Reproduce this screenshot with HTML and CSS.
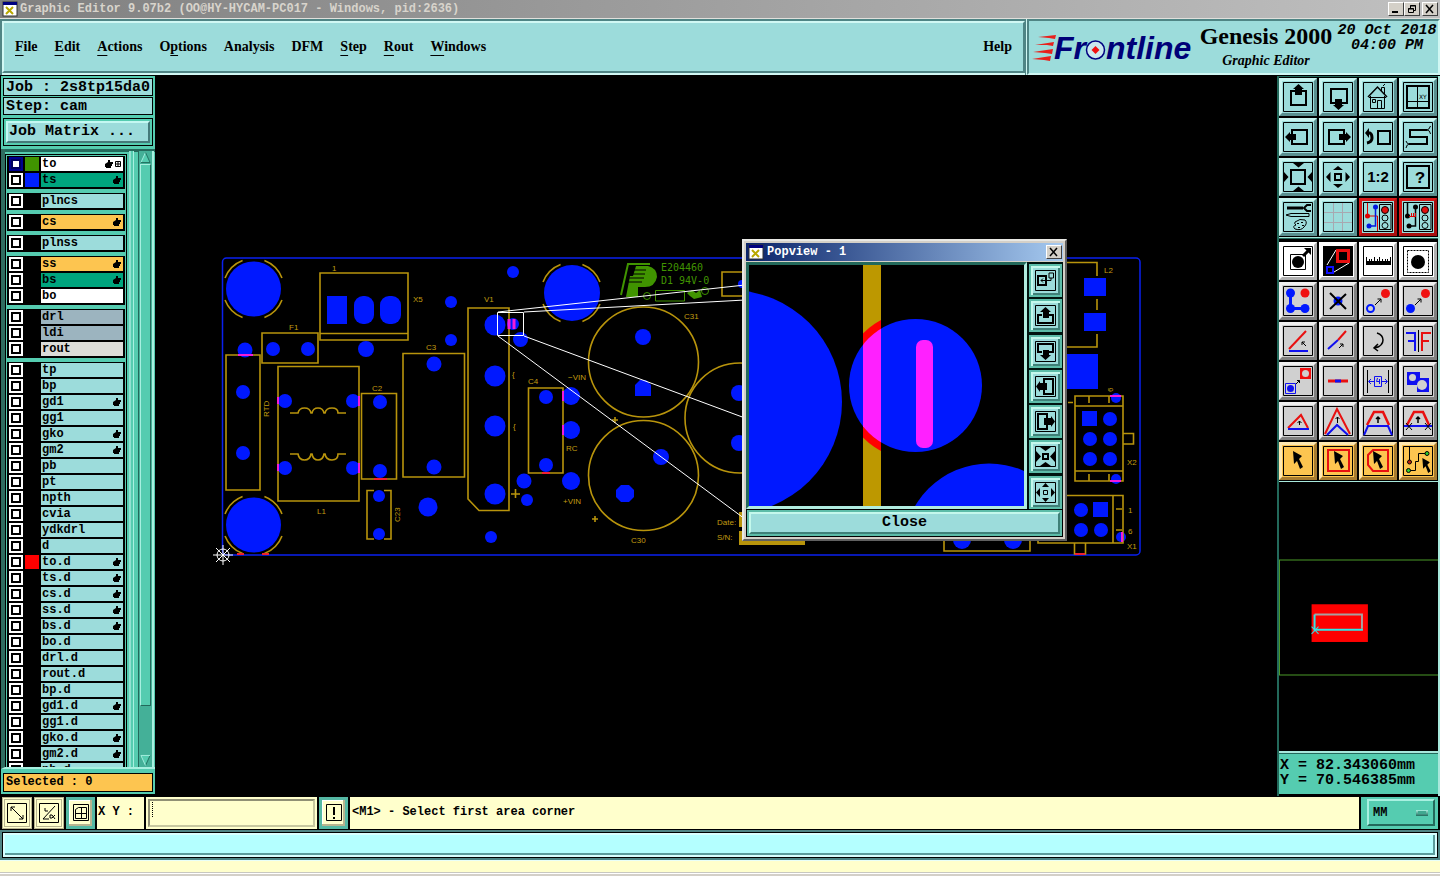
FILE: index.html
```html
<!DOCTYPE html>
<html lang="en">
<head>
<meta charset="utf-8">
<title>Graphic Editor 9.07b2</title>
<link rel="stylesheet" href="styles.css">
</head>
<body>
<svg class="defs" aria-hidden="true">
  <symbol id="hand" viewBox="0 0 8 8"><path d="M0 4L3 2V0H5V2H8V4H7V6H6V8H1V7H0Z" fill="#000"/></symbol>
  <symbol id="app" viewBox="0 0 16 16"><rect x="1" y="1" width="14" height="14" fill="#fff" stroke="#333"/><rect x="1" y="1" width="14" height="3" fill="#000080"/><path d="M4 6L11 13M11 6L4 13" stroke="#b8a800" stroke-width="2"/></symbol>
  <symbol id="cursor" viewBox="0 0 10 18"><path d="M0 0L9 5L6 8L10 16L7 18L4 10L1 13Z"/></symbol>
</svg>

<header class="titlebar">
  <svg class="app-icon"><use href="#app"/></svg>
  <h1>Graphic Editor 9.07b2 (OO@HY-HYCAM-PC017 - Windows, pid:2636)</h1>
  <div class="window-buttons">
    <button aria-label="Minimize"><svg viewBox="0 0 12 10"><path d="M2 8H8" stroke="#000" stroke-width="2"/></svg></button>
    <button aria-label="Restore"><svg viewBox="0 0 12 10"><path d="M4.5 4V1.5H9.5V6.5H8M4 2H10M2.5 4.5H7.5V8.5H2.5ZM2 5H8" fill="none" stroke="#000"/></svg></button>
    <button class="last" aria-label="Close window"><svg viewBox="0 0 12 10"><path d="M2 1L9 9M9 1L2 9" stroke="#000" stroke-width="1.5"/></svg></button>
  </div>
</header>

<div class="topbar">
  <nav class="menu">
    <button><u>F</u>ile</button><button><u>E</u>dit</button><button><u>A</u>ctions</button><button>O<u>p</u>tions</button><button>Analysis</button><button>DFM</button><button><u>S</u>tep</button><button><u>R</u>out</button><button><u>W</u>indows</button>
    <button class="help">Help</button>
  </nav>
  <div class="brand">
    <svg class="logo" viewBox="0 0 164 40" role="img" aria-label="Frontline">
      <g fill="#e8201c"><path d="M6 8L24 6L23 10L17 9ZM3 16L22 13L21 17L15 16ZM1 23L21 20L20 25L13 24ZM0 30L19 27L18 32L12 31Z"/></g>
      <g class="logo-type"><text x="22" y="30">Fr</text><text x="74" y="30">ntline</text></g>
      <circle cx="63.500" cy="21" r="9" fill="#c8e8ee" stroke="#000080" stroke-width="1.500"/>
      <path d="M63.500 17L67.500 21L63.500 25L59.500 21Z" fill="#f01010"/>
    </svg>
    <div class="product"><strong>Genesis 2000</strong><em>Graphic Editor</em></div>
    <time class="clock">20 Oct 2018<br>04:00 PM</time>
  </div>
</div>

<main class="workspace">
  <aside class="sidebar">
    <div class="job"><p>Job : 2s8tp15da0</p><p>Step: cam</p></div>
    <div class="matrix"><button>Job Matrix ...</button></div>
    <div class="list-pane">
      <div class="layers">
        <div class="group">
          <label class="layer current"><input type="checkbox"><i class="swatch green"></i><span class="name white">to<svg class="hand"><use href="#hand"/></svg><svg class="win" viewBox="0 0 6 6"><path d="M.5 .5H5.500V5.500H.5ZM3 0V6M0 3H6" fill="none" stroke="#000"/></svg></span></label>
          <label class="layer"><input type="checkbox"><i class="swatch blue"></i><span class="name jade">ts<svg class="hand"><use href="#hand"/></svg></span></label>
        </div>
        <div class="group">
          <label class="layer"><input type="checkbox"><i class="swatch"></i><span class="name">plncs</span></label>
        </div>
        <div class="group">
          <label class="layer"><input type="checkbox"><i class="swatch"></i><span class="name amber">cs<svg class="hand"><use href="#hand"/></svg></span></label>
        </div>
        <div class="group">
          <label class="layer"><input type="checkbox"><i class="swatch"></i><span class="name">plnss</span></label>
        </div>
        <div class="group">
          <label class="layer"><input type="checkbox"><i class="swatch"></i><span class="name amber">ss<svg class="hand"><use href="#hand"/></svg></span></label>
          <label class="layer"><input type="checkbox"><i class="swatch"></i><span class="name jade">bs<svg class="hand"><use href="#hand"/></svg></span></label>
          <label class="layer"><input type="checkbox"><i class="swatch"></i><span class="name white">bo</span></label>
        </div>
        <div class="group">
          <label class="layer"><input type="checkbox"><i class="swatch"></i><span class="name slate">drl</span></label>
          <label class="layer"><input type="checkbox"><i class="swatch"></i><span class="name slate">ldi</span></label>
          <label class="layer"><input type="checkbox"><i class="swatch"></i><span class="name pale">rout</span></label>
        </div>
        <div class="group">
          <label class="layer"><input type="checkbox"><i class="swatch"></i><span class="name">tp</span></label>
          <label class="layer"><input type="checkbox"><i class="swatch"></i><span class="name">bp</span></label>
          <label class="layer"><input type="checkbox"><i class="swatch"></i><span class="name">gd1<svg class="hand"><use href="#hand"/></svg></span></label>
          <label class="layer"><input type="checkbox"><i class="swatch"></i><span class="name">gg1</span></label>
          <label class="layer"><input type="checkbox"><i class="swatch"></i><span class="name">gko<svg class="hand"><use href="#hand"/></svg></span></label>
          <label class="layer"><input type="checkbox"><i class="swatch"></i><span class="name">gm2<svg class="hand"><use href="#hand"/></svg></span></label>
          <label class="layer"><input type="checkbox"><i class="swatch"></i><span class="name">pb</span></label>
          <label class="layer"><input type="checkbox"><i class="swatch"></i><span class="name">pt</span></label>
          <label class="layer"><input type="checkbox"><i class="swatch"></i><span class="name">npth</span></label>
          <label class="layer"><input type="checkbox"><i class="swatch"></i><span class="name">cvia</span></label>
          <label class="layer"><input type="checkbox"><i class="swatch"></i><span class="name">ydkdrl</span></label>
          <label class="layer"><input type="checkbox"><i class="swatch"></i><span class="name">d</span></label>
          <label class="layer"><input type="checkbox"><i class="swatch red"></i><span class="name">to.d<svg class="hand"><use href="#hand"/></svg></span></label>
          <label class="layer"><input type="checkbox"><i class="swatch"></i><span class="name">ts.d<svg class="hand"><use href="#hand"/></svg></span></label>
          <label class="layer"><input type="checkbox"><i class="swatch"></i><span class="name">cs.d<svg class="hand"><use href="#hand"/></svg></span></label>
          <label class="layer"><input type="checkbox"><i class="swatch"></i><span class="name">ss.d<svg class="hand"><use href="#hand"/></svg></span></label>
          <label class="layer"><input type="checkbox"><i class="swatch"></i><span class="name">bs.d<svg class="hand"><use href="#hand"/></svg></span></label>
          <label class="layer"><input type="checkbox"><i class="swatch"></i><span class="name">bo.d</span></label>
          <label class="layer"><input type="checkbox"><i class="swatch"></i><span class="name">drl.d</span></label>
          <label class="layer"><input type="checkbox"><i class="swatch"></i><span class="name">rout.d</span></label>
          <label class="layer"><input type="checkbox"><i class="swatch"></i><span class="name">bp.d</span></label>
          <label class="layer"><input type="checkbox"><i class="swatch"></i><span class="name">gd1.d<svg class="hand"><use href="#hand"/></svg></span></label>
          <label class="layer"><input type="checkbox"><i class="swatch"></i><span class="name">gg1.d</span></label>
          <label class="layer"><input type="checkbox"><i class="swatch"></i><span class="name">gko.d<svg class="hand"><use href="#hand"/></svg></span></label>
          <label class="layer"><input type="checkbox"><i class="swatch"></i><span class="name">gm2.d<svg class="hand"><use href="#hand"/></svg></span></label>
          <label class="layer"><input type="checkbox"><i class="swatch"></i><span class="name">pb.d</span></label>
        </div>
      </div>
      <div class="rail"></div>
      <div class="scrollbar">
        <svg viewBox="0 0 12 13"><path d="M6 1L11 12H1Z" fill="#55ccb0"/><path d="M1 12L6 1" stroke="#a8f0e0" fill="none"/><path d="M6 1L11 12H1" stroke="#1f6b5c" fill="none"/></svg>
        <div class="thumb"></div>
        <svg viewBox="0 0 12 13"><path d="M1 1H11L6 12Z" fill="#55ccb0"/><path d="M11 1L6 12" stroke="#1f6b5c" fill="none"/><path d="M11 1H1L6 12" stroke="#a8f0e0" fill="none"/></svg>
      </div>
    </div>
    <p class="selected">Selected : 0</p>
  </aside>

  <section class="canvas">
    <svg class="board" viewBox="155 76 1122 720" preserveAspectRatio="xMinYMin meet">
      <g fill="#0018ff">
        <circle cx="253.500" cy="289" r="27.500"/><circle cx="253.500" cy="525" r="27.500"/><circle cx="572" cy="293" r="28"/>
        <rect x="327" y="296" width="20" height="28"/><rect x="354" y="296" width="20" height="28" rx="9"/><rect x="380" y="296" width="21" height="28" rx="9"/>
        <circle cx="245" cy="350" r="7.500"/><circle cx="273" cy="349" r="7"/><circle cx="308" cy="349" r="7"/><circle cx="366" cy="349" r="8"/>
        <circle cx="451" cy="302" r="6"/><circle cx="451" cy="340" r="6"/><circle cx="243" cy="392" r="7"/><circle cx="243" cy="453" r="7"/>
        <circle cx="285" cy="401" r="7"/><circle cx="353" cy="401" r="7"/><circle cx="285" cy="468" r="7"/><circle cx="353" cy="468" r="7"/>
        <circle cx="380" cy="402" r="7"/><circle cx="380" cy="471" r="7"/><circle cx="434" cy="364" r="7.500"/><circle cx="434" cy="467" r="7.500"/>
        <circle cx="379" cy="496" r="6"/><circle cx="379" cy="534" r="6"/><circle cx="428" cy="507" r="9.500"/>
        <circle cx="513" cy="272" r="6"/><circle cx="495" cy="325" r="10.500"/><circle cx="495" cy="376" r="10.500"/><circle cx="495" cy="426" r="10.500"/><circle cx="495" cy="494" r="10.500"/>
        <circle cx="513" cy="324" r="6"/><circle cx="520.500" cy="339.500" r="7.500"/><circle cx="546" cy="397" r="7"/><circle cx="546" cy="465" r="7"/>
        <circle cx="571" cy="396" r="9"/><circle cx="571" cy="430" r="9"/><circle cx="571" cy="481" r="9"/><circle cx="524" cy="481" r="7.500"/><circle cx="527" cy="500" r="6"/><circle cx="491" cy="537" r="6"/>
        <circle cx="643" cy="337" r="8"/><path d="M640 380H646L651 385V396H635V385Z"/><circle cx="661" cy="457" r="8"/>
        <path d="M621 485H629L634 490V497L629 502H621L616 497V490Z"/><circle cx="739" cy="393" r="8"/><circle cx="739" cy="443" r="8"/><circle cx="742" cy="284" r="4"/>
        <rect x="1084" y="278" width="22" height="18"/><rect x="1084" y="313" width="22" height="18"/><rect x="1060" y="354" width="38" height="35"/>
        <rect x="1082" y="411" width="15" height="15"/><circle cx="1110" cy="419" r="7"/><circle cx="1090" cy="439" r="7"/><circle cx="1110" cy="439" r="7"/><circle cx="1090" cy="459" r="7"/><circle cx="1110" cy="459" r="7"/>
        <circle cx="1081" cy="510" r="7"/><rect x="1093" y="502" width="15" height="15"/><circle cx="1081" cy="530" r="7"/><circle cx="1101" cy="530" r="7"/>
        <circle cx="1116" cy="398" r="5"/><circle cx="1116" cy="479" r="5"/><circle cx="1121" cy="537" r="5"/><circle cx="962" cy="540" r="9"/><circle cx="1013" cy="540" r="9"/>
      </g>
      <rect x="222.500" y="258" width="917.500" height="297" rx="4" fill="none" stroke="#0a20f0" stroke-width="1.500"/>
      <g fill="none" stroke="#b8940c" stroke-width="1.600">
        <g stroke-dasharray="48 42" stroke-dashoffset="-21"><circle cx="253.500" cy="289" r="30.500" pathLength="360"/><circle cx="253.500" cy="525" r="30.500" pathLength="360"/><circle cx="571.500" cy="293" r="30.500" pathLength="360"/></g>
        <path d="M320 273H408V340H320ZM320 333.500H408M262 333H318V363H262ZM226 355H260V490H226ZM278 366.500H359V501H278ZM361.500 393.500H396.500V479H361.500ZM403 353.500H464.500V477H403Z"/>
        <path d="M374 490.500H367V539H374M384 490.500H391V539H384"/>
        <path d="M468 308H509V510.500H479L468 499ZM528.500 388H563V473H528.500ZM722 272H745V296H722Z"/>
        <path d="M290 413H298Q299 408 304.500 408T311 413H312Q313 408 318 408T324 413H325Q326 408 332 408T338 413H346M290 454H298Q299 460 304.500 460T311 454H312Q313 460 318 460T324 454H325Q326 460 332 460T338 454H346"/>
        <circle cx="643.500" cy="362" r="55"/><circle cx="643.500" cy="475.500" r="55"/><circle cx="740" cy="418" r="55"/>
        <path d="M1060 262.500H1097V276M1097 299V310M1097 334V347H1060"/>
        <path d="M1075 396H1123V481H1075ZM1075 406H1123M1075 471H1123M1089 396V403M1109 396V403M1089 474V481M1109 474V481M1123 433.500H1133.500V444H1123M1068 402.500H1073"/>
        <path d="M1060 495.500H1123V543H1038V540M1113 496V543M1116 509H1122M1116 530H1122M1074.500 543V554H1085.500V543M944 540V551H1030V540"/>
        <path d="M511 494H520M515.500 489V498M592 519H598M595 516V522M612 420H618M615 417V423"/>
      </g>
      <path d="M739 512H745V527H739ZM739 531H745V540H805V545H739Z" fill="#b8940c"/>
      <g stroke="#f41cd8" stroke-width="2"><path d="M238 355H253M278 397V404M359 396V406M278 464V471M359 463V473M563 391V401M563 425V435M1110 396H1121M1110 481H1121M1122 532V542"/><path d="M509 319V329M514 319V329" stroke-width="3"/><path d="M374 479H387M542 473H550M1075 554H1085M237 554H244M262 554H269" stroke="#f02030"/></g>
      <g class="silk">
        <text x="332" y="271">1</text><text x="413" y="302">X5</text><text x="289" y="330">F1</text><text x="372" y="391">C2</text><text x="426" y="350">C3</text><text x="317" y="514">L1</text>
        <text transform="translate(269 417) rotate(-90)">RTD</text><text transform="translate(400 522) rotate(-90)">C23</text>
        <text x="484" y="302">V1</text><text x="528" y="384">C4</text><text x="568" y="380">−VIN</text><text x="566" y="451">RC</text><text x="563" y="504">+VIN</text><text x="684" y="319">C31</text><text x="631" y="543">C30</text><text x="512" y="377">{</text><text x="513" y="429">{</text><text x="717" y="525">Date:</text><text x="717" y="540">S/N:</text>
        <text x="1104" y="273">L2</text><text x="1127" y="465">X2</text><text x="1127" y="549">X1</text><text x="1128" y="513">1</text><text x="1128" y="534">6</text><text transform="translate(1113 392) rotate(-90)">6</text>
      </g>
      <g fill="#409400"><path d="M636 266H648Q657 268 657 277Q655 287 645 287H638V297H626L630 276H633Z"/><text class="mark" x="661" y="271">E204460</text><text class="mark" x="661" y="284">D1 94V-0</text><path d="M687 293L692 290L696 293L700 290L702 297L694 299L690 296Z"/></g>
      <path d="M631 270H646M630 274H645M629 278H644M628 282H642" stroke="#000"/>
      <path d="M650 264H628L621 295" fill="none" stroke="#409400" stroke-width="2"/><path d="M655.500 290.500H684.500V301H655.500Z" fill="none" stroke="#409400"/><g fill="none" stroke="#409400"><circle cx="647" cy="296" r="3.500"/><circle cx="705" cy="291" r="3.500"/></g>
      <path d="M497.500 312.500H523.500V335.500H497.500ZM498 312L745 285M524 312L745 300M524 336L745 418M498 336L745 519" fill="none" stroke="#fff"/>
      <g fill="none" stroke="#fff"><circle cx="223" cy="555" r="6"/><path d="M213 555H233M223 545V565M216 548L230 562M230 548L216 562"/></g>
    </svg>

    <div class="popup" role="dialog" aria-label="Popview - 1">
      <div class="popup-title"><svg class="app-icon"><use href="#app"/></svg><h2>Popview - 1</h2><button class="win-close" aria-label="Close popview"><svg viewBox="0 0 12 10"><path d="M2 1L9 9M9 1L2 9" stroke="#000" stroke-width="1.5"/></svg></button></div>
      <div class="popup-body">
        <div class="popup-main">
          <svg class="view" viewBox="749 265 275 241">
            <defs><clipPath id="band"><path d="M863 265H881V506H863Z"/></clipPath></defs>
            <g fill="#0018ff"><circle cx="730" cy="402" r="112"/><circle cx="915.500" cy="385.500" r="66.500"/><circle cx="989" cy="549" r="85.500"/></g>
            <g clip-path="url(#band)"><path d="M863 265H881V506H863Z" fill="#bd9800"/><circle cx="915.500" cy="385.500" r="74" fill="#f00"/><circle cx="915.500" cy="385.500" r="66.500" fill="#ff20ff"/></g>
            <rect x="916" y="340" width="17" height="108" rx="7" fill="#ff20ff"/>
          </svg>
          <div class="popup-tools">
            <button aria-label="Attach"><svg viewBox="0 0 21 21"><path d="M.5 .5H20.500V20.500H.5Z"/><path d="M3 6H11V15H3Z" stroke-width="2"/><path d="M14 3H18.500V8H14ZM16 8V10.500H6M8 8.500L6 10.500L8 12.500"/></svg></button>
            <button aria-label="Pan up"><svg viewBox="0 0 21 21"><path d="M.5 .5H20.500V20.500H.5Z"/><path d="M7 10H3V18H18V10H14" stroke-width="2"/><path class="f" d="M10.500 2L16 7H14V13H8V7H5Z"/></svg></button>
            <button aria-label="Pan down"><svg viewBox="0 0 21 21"><path d="M.5 .5H20.500V20.500H.5Z"/><path d="M7 11H3V3H18V11H14" stroke-width="2"/><path class="f" d="M10.500 19L16 14H14V9H8V14H5Z"/></svg></button>
            <button aria-label="Pan left"><svg viewBox="0 0 21 21"><path d="M.5 .5H20.500V20.500H.5Z"/><path d="M9 7V3H18V18H9V14" stroke-width="2"/><path class="f" d="M1 10.500L5 5V7H12V14H5V16Z"/></svg></button>
            <button aria-label="Pan right"><svg viewBox="0 0 21 21"><path d="M.5 .5H20.500V20.500H.5Z"/><path d="M12 7V3H3V18H12V14" stroke-width="2"/><path class="f" d="M20 10.500L16 5V7H9V14H16V16Z"/></svg></button>
            <button aria-label="Zoom in"><svg viewBox="0 0 21 21"><path d="M.5 .5H20.500V20.500H.5Z"/><path d="M8 8H13V13H8Z" stroke-width="2"/><path class="f" d="M5 1H16L10.500 5ZM5 20H16L10.500 16ZM1 5L6 10.500L1 16ZM20 5L15 10.500L20 16Z"/></svg></button>
            <button aria-label="Zoom out"><svg viewBox="0 0 21 21"><path d="M.5 .5H20.500V20.500H.5Z"/><path d="M8.500 8.500H12.500V12.500H8.500Z"/><path class="f" d="M7 5H14L10.500 1ZM7 16H14L10.500 20ZM5 6V15L1 10.500ZM16 6V15L20 10.500Z"/></svg></button>
          </div>
        </div>
        <div class="popup-foot"><button>Close</button></div>
      </div>
    </div>
  </section>

  <aside class="tools">
    <div class="tool-grid">
      <button aria-label="Pan up"><svg viewBox="0 0 30 30"><path d="M.5 .5H29.500V29.500H.5Z"/><path d="M8 9H23V23H8Z" stroke-width="2"/><path class="f" d="M15.500 2L21 7H19V13H12V7H10Z"/></svg></button>
      <button aria-label="Pan down"><svg viewBox="0 0 30 30"><path d="M.5 .5H29.500V29.500H.5Z"/><path d="M8 7H24V21H8Z" stroke-width="2"/><path class="f" d="M15.500 28L21 23H19V17H12V23H10Z"/></svg></button>
      <button aria-label="Home"><svg viewBox="0 0 30 30"><path d="M.5 .5H29.500V29.500H.5Z"/><path d="M5 15L14.500 5L24 15" stroke-width="1.500"/><path d="M7.500 14V26.500H21.500V14M14.500 26V18.500H18.500V26M9.500 17.500H12.500V20.500H9.500ZM6 15.500H23M18.500 9V5.500H21.500V12M20 4L22 2"/></svg></button>
      <button aria-label="Window XY"><svg viewBox="0 0 30 30"><path d="M.5 .5H29.500V29.500H.5Z"/><path d="M4 4H26V26H4Z" stroke-width="2"/><path d="M14.500 4V26M4 19.500H26"/><text class="tiny" x="16" y="17">XY</text></svg></button>

      <button aria-label="Pan left"><svg viewBox="0 0 30 30"><path d="M.5 .5H29.500V29.500H.5Z"/><path d="M9 8H24V22H9Z" stroke-width="2"/><path class="f" d="M2 15L7 10V12H13V18H7V20Z"/></svg></button>
      <button aria-label="Pan right"><svg viewBox="0 0 30 30"><path d="M.5 .5H29.500V29.500H.5Z"/><path d="M6 8H21V22H6Z" stroke-width="2"/><path class="f" d="M28 15L23 10V12H16V18H23V20Z"/></svg></button>
      <button aria-label="Previous view"><svg viewBox="0 0 30 30"><path d="M.5 .5H29.500V29.500H.5Z"/><path d="M15 9H27V22H15Z" stroke-width="2"/><path d="M5 11H7Q9 12 9 16T4 21" stroke-width="3"/><path class="f" d="M2 11L6 6V16Z"/></svg></button>
      <button aria-label="Snake"><svg viewBox="0 0 30 30"><path d="M.5 .5H29.500V29.500H.5Z"/><path d="M24 8H7V15H24V22H6" stroke-width="2"/><path d="M27.500 4Q26 8 24 8Q27 8 27.500 12M3 19Q4 22 6 22Q4 22 3 26"/></svg></button>

      <button aria-label="Zoom in"><svg viewBox="0 0 30 30"><path d="M.5 .5H29.500V29.500H.5Z"/><path d="M8 8H22V22H8Z" stroke-width="2"/><path class="f" d="M10 1H21L15.500 5.500ZM10 29H21L15.500 24.500ZM1 10L5.500 15L1 20ZM29 10L24.500 15L29 20Z"/></svg></button>
      <button aria-label="Zoom out"><svg viewBox="0 0 30 30"><path d="M.5 .5H29.500V29.500H.5Z"/><path d="M12 12H18V18H12Z" stroke-width="2"/><path class="f" d="M10 8H20L15 4ZM10 22H20L15 26ZM7.500 10V20L3 15ZM22.500 10V20L27 15Z"/></svg></button>
      <button aria-label="Scale 1:2"><svg viewBox="0 0 30 30"><path d="M.5 .5H29.500V29.500H.5Z"/><text class="ratio" x="15" y="20">1:2</text></svg></button>
      <button aria-label="Help"><svg viewBox="0 0 30 30"><path d="M.5 .5H29.500V29.500H.5Z"/><path d="M4 4H26V26H4Z" stroke-width="2"/><text class="query" x="17" y="21">?</text></svg></button>

      <button aria-label="Settings"><svg viewBox="0 0 30 30"><path d="M.5 .5H29.500V29.500H.5Z"/><path d="M4 6H20" stroke-width="3"/><path d="M28 3H24L21 6L24 9H28" stroke-width="2"/><path d="M3 13L8 11.500H26V14.500H8ZM12 20Q17 16 22 18Q25 21 21 25Q18 29 12 27Q9 24 13 23Q11 22 12 20Z"/><path d="M15 21V22M19 20V21M20 23V24M16 25V26" stroke-width="2"/></svg></button>
      <button aria-label="Grid"><svg viewBox="0 0 30 30"><path d="M.5 .5H29.500V29.500H.5Z"/><path d="M10.500 1V29M19.500 1V29M1 10.500H29M1 20.500H29" stroke="#a8a8b0"/></svg></button>
      <button class="alert" aria-label="Net check"><svg viewBox="0 0 30 30"><path d="M.5 .5H29.500V29.500H.5Z"/><path d="M4.500 1V14H14.500V29" stroke="#e00000"/><path d="M12.500 5V24H6" stroke="#0018e0" stroke-width="1.500"/><g stroke="none"><circle cx="12.500" cy="5" r="2.500" fill="#0018e0"/><circle cx="6" cy="24" r="2.500" fill="#0018e0"/><circle cx="4.500" cy="14" r="2.500" fill="#e00000"/></g><path d="M16.500 2.500H28V27.500H16.500Z"/><circle cx="22" cy="8" r="3.500" fill="#e01010"/><circle cx="22" cy="16" r="3"/><circle cx="22" cy="23.500" r="3"/></svg></button>
      <button class="alert" aria-label="Rule check"><svg viewBox="0 0 30 30"><path d="M.5 .5H29.500V29.500H.5Z"/><path d="M4.500 1V14M12.500 5V24H6" stroke-width="1.500"/><g class="f"><circle cx="12.500" cy="5" r="2.500"/><circle cx="6" cy="24" r="2.500"/><circle cx="4.500" cy="14" r="2.500"/></g><path d="M6 14.500H13M8.500 11V14M10.500 11V14M12.500 11V14" stroke="#e00000"/><path d="M16.500 2.500H28V27.500H16.500Z"/><circle cx="22" cy="8" r="3.500" fill="#e01010"/><circle cx="22" cy="16" r="3"/><circle cx="22" cy="23.500" r="3"/></svg></button>
    </div>

    <div class="tool-grid edit">
      <button class="bright" aria-label="Select feature"><svg viewBox="0 0 30 30"><path d="M.5 .5H29.500V29.500H.5Z"/><path d="M7.500 8.500H22.500V23.500H7.500Z"/><circle class="f" cx="15" cy="16" r="6"/><path d="M20 10L26 4" stroke-width="3"/><path class="f" d="M21 2H28V9Z"/></svg></button>
      <button class="bright" aria-label="Popview"><svg viewBox="0 0 30 30"><path class="f" d="M0 0H30V30H0Z"/><path d="M4 19L13 4M11 26L26 17" stroke="#fff"/><path d="M14.500 4.500H25.500V15.500H14.500Z" stroke="#e81010" stroke-width="3"/><path d="M4 21H10V27H4Z" stroke="#1010ff" stroke-width="2"/></svg></button>
      <button class="bright" aria-label="Measure"><svg viewBox="0 0 30 30"><path d="M.5 .5H29.500V29.500H.5Z"/><path class="f" d="M3 15H28V19H3Z"/><path d="M3.500 11V16M6.500 13V16M8.500 13V16M11.500 11V16M14.500 13V16M16.500 11V16M19.500 13V16M22.500 13V16M24.500 13V16M27.500 11V16"/></svg></button>
      <button class="bright" aria-label="Reference selection"><svg viewBox="0 0 30 30"><path d="M.5 .5H29.500V29.500H.5Z"/><path d="M4.500 4.500H25.500V26.500H4.500Z" stroke-dasharray="2 1"/><circle class="f" cx="15" cy="16" r="7"/></svg></button>

      <button aria-label="Add"><svg viewBox="0 0 30 30"><path d="M.5 .5H29.500V29.500H.5Z"/><path d="M7.500 7V22.500H22" stroke="#0018ff" stroke-width="3"/><g stroke="none" fill="#0018ff"><circle cx="7.500" cy="7" r="4.500"/><circle cx="7.500" cy="22.500" r="4.500"/><circle cx="22" cy="22.500" r="4.500"/></g><circle cx="22" cy="7" r="4.500" fill="#f01010" stroke="none"/></svg></button>
      <button aria-label="Delete"><svg viewBox="0 0 30 30"><path d="M.5 .5H29.500V29.500H.5Z"/><circle cx="15" cy="15" r="4.500" fill="#0018ff" stroke="none"/><path d="M7 7L23 23M23 8L7 23" stroke-width="2"/></svg></button>
      <button aria-label="Copy"><svg viewBox="0 0 30 30"><path d="M.5 .5H29.500V29.500H.5Z"/><circle cx="7.500" cy="22.500" r="3.500" stroke="#0018ff" stroke-width="2"/><circle cx="22.500" cy="7.500" r="4.500" fill="#f01010" stroke="none"/><path d="M12 19L18 13M14.500 13H18V16.500"/></svg></button>
      <button aria-label="Move"><svg viewBox="0 0 30 30"><path d="M.5 .5H29.500V29.500H.5Z"/><circle cx="7.500" cy="22.500" r="4.500" fill="#0018ff" stroke="none"/><circle cx="22.500" cy="7.500" r="4.500" fill="#f01010" stroke="none"/><path d="M12 19L18 13M14.500 13H18V16.500"/></svg></button>

      <button aria-label="Rotate line"><svg viewBox="0 0 30 30"><path d="M.5 .5H29.500V29.500H.5Z"/><path d="M6 23L23 5" stroke="#e81010" stroke-width="2"/><path d="M6 25H25" stroke="#1010f0" stroke-width="2"/><path d="M23 20L19 16M19 19V16H22"/></svg></button>
      <button aria-label="Extend line"><svg viewBox="0 0 30 30"><path d="M.5 .5H29.500V29.500H.5Z"/><path d="M15 14L23 5" stroke="#e81010" stroke-width="2"/><path d="M5 23L15 14" stroke="#1010f0" stroke-width="2"/><path d="M16 22L20 18M17 18H20V21"/></svg></button>
      <button aria-label="Rotate"><svg viewBox="0 0 30 30"><path d="M.5 .5H29.500V29.500H.5Z"/><path d="M14 7Q20 9 20 14Q20 20 12 22M15 18L11 22L15 25" stroke-width="1.500"/></svg></button>
      <button aria-label="Mirror"><svg viewBox="0 0 30 30"><path d="M.5 .5H29.500V29.500H.5Z"/><path d="M3 7H12V25M5 15H12" stroke="#1010f0" stroke-width="2"/><path d="M15.500 4V26"/><path d="M28 7H19V25M26 15H19" stroke="#e81010" stroke-width="2"/></svg></button>

      <button aria-label="Change symbol"><svg viewBox="0 0 30 30"><path d="M.5 .5H29.500V29.500H.5Z"/><path d="M17 2H28V13H17Z" fill="#f01010" stroke="none"/><circle cx="22.500" cy="7.500" r="3.500" fill="#d0d0d0" stroke="none"/><path d="M2.500 17.500H12.500V27.500H2.500Z" stroke="#1010f0"/><circle cx="7.500" cy="22.500" r="3.500" fill="#1010f0" stroke="none"/><path d="M13 18L16.500 14.500M14 14.500H16.500V17"/></svg></button>
      <button aria-label="Break line"><svg viewBox="0 0 30 30"><path d="M.5 .5H29.500V29.500H.5Z"/><path d="M5 15H25" stroke="#e81010" stroke-width="3"/><path d="M12 15H18" stroke="#1010f0" stroke-width="3"/></svg></button>
      <button aria-label="Spacing"><svg viewBox="0 0 30 30"><path d="M.5 .5H29.500V29.500H.5Z"/><path d="M4.500 4V27M25.500 4V27"/><path d="M11.500 10.500H18.500V20.500H11.500ZM11 15.500H6M8 13L5.500 15.500L8 18M19 15.500H24M22 13L24.500 15.500L22 18M14.500 12L13.500 15.500H17M16.500 13V18" stroke="#1010f0"/></svg></button>
      <button aria-label="Surface"><svg viewBox="0 0 30 30"><path d="M.5 .5H29.500V29.500H.5Z"/><path d="M4 6H17V12H26V26H14V19H4Z" fill="#1010f0" stroke="none"/><g fill="#d0d0d0" stroke="none"><circle cx="9.500" cy="11.500" r="3.500"/><circle cx="19" cy="19" r="5"/></g></svg></button>

      <button aria-label="Corner triangle"><svg viewBox="0 0 30 30"><path d="M.5 .5H29.500V29.500H.5Z"/><path d="M5 22L18 9L25 22" stroke="#e81010" stroke-width="2"/><path d="M5 23H26" stroke="#1010f0" stroke-width="2"/><path d="M16.500 19V15M14.500 17L16.500 15L18.500 17"/></svg></button>
      <button aria-label="Move corner"><svg viewBox="0 0 30 30"><path d="M.5 .5H29.500V29.500H.5Z"/><path d="M2 28L14 3L27 28" stroke="#e81010" stroke-width="2"/><path d="M4 29L14 19L25 29" stroke="#1010f0" stroke-width="2"/><path d="M14.500 17V11M12.500 13L14.500 11L16.500 13"/></svg></button>
      <button aria-label="Move segment"><svg viewBox="0 0 30 30"><path d="M.5 .5H29.500V29.500H.5Z"/><path d="M4 19L11 6H20L26 19" stroke="#e81010" stroke-width="2.500"/><path d="M1 29L5 20H25L29 29" stroke="#1010f0" stroke-width="2"/><path d="M15 17V11M13 13L15 11L17 13" stroke-width="1.500"/></svg></button>
      <button aria-label="Offset segment"><svg viewBox="0 0 30 30"><path d="M.5 .5H29.500V29.500H.5Z"/><path d="M4 19L11 6H20L26 19" stroke="#e81010" stroke-width="2.500"/><path d="M1 20H29" stroke="#1010f0" stroke-width="2"/><path d="M15 17V11M13 13L15 11L17 13" stroke-width="1.500"/><path d="M3 17L9 24M9 17L3 24M22 17L28 24M28 17L22 24"/></svg></button>

      <button class="pick" aria-label="Select"><svg viewBox="0 0 30 30"><path d="M.5 .5H29.500V29.500H.5Z"/><use class="f" href="#cursor" x="10" y="5" width="10" height="18"/></svg></button>
      <button class="pick" aria-label="Frame select"><svg viewBox="0 0 30 30"><path d="M.5 .5H29.500V29.500H.5Z"/><path d="M5 4H26V25H5Z" stroke="#e81010" stroke-width="2"/><use class="f" href="#cursor" x="11" y="5" width="10" height="18"/></svg></button>
      <button class="pick" aria-label="Polygon select"><svg viewBox="0 0 30 30"><path d="M.5 .5H29.500V29.500H.5Z"/><path d="M10 4H25V25H10L5 19V9Z" stroke="#e81010" stroke-width="2"/><use class="f" href="#cursor" x="10" y="5" width="10" height="18"/></svg></button>
      <button class="pick" aria-label="Net select"><svg viewBox="0 0 30 30"><path d="M.5 .5H29.500V29.500H.5Z"/><path d="M6.500 1V15M23 7.500H15.500V15.500H12.500V24.500H6"/><circle cx="6.500" cy="16" r="2" fill="#c02010"/><circle cx="24" cy="7.500" r="2" fill="#30d030"/><circle cx="5.500" cy="24.500" r="2" fill="#30d030"/><use class="f" href="#cursor" x="19" y="12" width="9" height="15"/></svg></button>
    </div>

    <svg class="overview" viewBox="0 0 161 264" preserveAspectRatio="none" role="img" aria-label="Board overview">
      <path d="M162 76.500H.5V189.500H162" fill="none" stroke="#4b9a28"/>
      <rect x="33" y="120" width="57" height="37" fill="#f00"/>
      <path d="M36 130H84V144" fill="none" stroke="#a8a0a0" stroke-width="2"/><path d="M36 130V145H85" fill="none" stroke="#30e8e8" stroke-width="2"/>
      <path d="M33 142L40 149M40 142L33 149" stroke="#30e8e8"/>
    </svg>
    <p class="coords">X = 82.343060mm<br>Y = 70.546385mm</p>
  </aside>
</main>

<div class="status">
  <button class="mode" aria-label="Absolute mode"><svg viewBox="0 0 20 20"><path d="M.5 .5H19.500V19.500H.5Z"/><path d="M4 4L16 16M4 8V4H8M16 12V16H12"/></svg></button>
  <button class="mode" aria-label="Polar mode"><svg viewBox="0 0 20 20"><path d="M.5 .5H19.500V19.500H.5Z"/><path d="M16 3L4 16H10M6 5V8H9M13 12H11V15H13L16 12M13 12L16 16"/></svg></button>
  <button class="mode framed" aria-label="Grid mode"><svg viewBox="0 0 16 18"><path d="M.5 .5H15.500V16.500H.5Z"/><path d="M2.500 5.500L5.500 3.500H13.500V14.500H2.500ZM8.500 3V14M3 9.500H14"/></svg></button>
  <label class="xy" for="xy">X Y :</label>
  <div class="entry"><input id="xy" type="text"><i class="caret"></i></div>
  <button class="mode framed" aria-label="Alert"><svg viewBox="0 0 16 18"><path d="M.5 .5H15.500V16.500H.5Z"/><path d="M8 3V11M8 13V15" stroke-width="2"/></svg></button>
  <output class="prompt">&lt;M1&gt; - Select first area corner</output>
  <div class="units"><select aria-label="Units"><option>MM</option></select></div>
</div>
<div class="message"><div></div></div>
<footer class="footer"></footer>
</body>
</html>
```

FILE: styles.css
```css
:root {
  --aqua: #9cdcdb;
  --aqua-light: #d0f8f4;
  --aqua-dark: #4f8585;
  --teal: #55ccb0;
  --teal-dark: #23695b;
  --cream: #ffffcc;
  --amber: #fdc550;
  --mono: "Liberation Mono", monospace;
  --serif: "Liberation Serif", serif;
}
* { box-sizing: border-box; }
body {
  margin: 0;
  min-height: 100vh;
  display: flex;
  flex-direction: column;
  background: #000;
  color: #000;
  font: bold 12px/14px var(--mono);
}
p, h1, h2 { margin: 0; font: inherit; }
button, input, select { margin: 0; padding: 0; border: 0; border-radius: 0; font: inherit; color: inherit; background: none; }
svg { display: block; flex: none; }
.defs { position: absolute; width: 0; height: 0; }
.app-icon { width: 16px; height: 16px; }

/* window title */
.titlebar {
  display: flex;
  align-items: center;
  gap: 2px;
  height: 19px;
  padding: 0 2px;
  color: #d8d4cc;
  background: linear-gradient(90deg, #808080, #c0c0c0);
  border-bottom: 1px solid #e0e0dc;
}
.titlebar h1 { flex: 1; white-space: nowrap; }
.window-buttons { display: flex; }
.window-buttons button, .win-close {
  width: 16px;
  height: 14px;
  background: #d4d0c8;
  border: 1px solid;
  border-color: #fff #404040 #404040 #fff;
}
.window-buttons .last { margin-left: 2px; }
.window-buttons svg, .win-close svg { width: 12px; height: 10px; margin: auto; }

/* menu and brand */
.topbar {
  display: flex;
  height: 57px;
  background: var(--aqua-dark);
  border-bottom: 1px solid #000;
  font-family: var(--serif);
}
.menu {
  flex: 1;
  display: flex;
  align-items: center;
  gap: 17px;
  margin: 2px 2px 2px 2px;
  padding: 0 11px;
  background: var(--aqua);
  border: 2px solid;
  border-color: var(--aqua-light) var(--aqua-dark) var(--aqua-dark) var(--aqua-light);
  box-shadow: 0 2px 0 var(--aqua-light);
}
.menu button { font-size: 14px; line-height: 18px; }
.menu u { text-underline-offset: 4px; text-decoration-thickness: 1px; }
.menu .help { margin-left: auto; }
.brand {
  flex: 0 0 413px;
  display: flex;
  padding: 2px 0 0 3px;
  background: var(--aqua);
  border: 2px solid;
  border-color: var(--aqua-dark) var(--aqua-light) var(--aqua-light) var(--aqua-dark);
  box-shadow: -1px 0 0 var(--aqua-light);
}
.logo { width: 164px; height: 40px; margin-top: 6px; }
.logo-type { font: italic bold 32px "Liberation Sans", sans-serif; fill: #000078; }
.product { flex: 1; display: flex; flex-direction: column; align-items: center; white-space: nowrap; }
.product strong { font-size: 24px; line-height: 26px; }
.product em { font-size: 14px; line-height: 24px; }
.clock { width: 102px; text-align: center; font: italic bold 15px/15px var(--mono); white-space: nowrap; }

/* workspace */
.workspace { flex: 1; display: flex; min-height: 0; }
.sidebar {
  flex: 0 0 154px;
  display: flex;
  flex-direction: column;
  height: 718px;
  margin: 0 0 2px 1px;
  padding: 2px;
  background: var(--teal);
}
.job { display: grid; gap: 1px; padding-bottom: 1px; }
.job p { height: 18px; padding: 0 2px; font-size: 15px; line-height: 18px; background: var(--aqua); border: 1px solid #000; white-space: nowrap; }
.matrix { margin-top: 2px; padding: 2px; border: 1px solid #000; }
.matrix button {
  width: 100%;
  padding: 0 1px;
  text-align: left;
  font-size: 15px;
  line-height: 18px;
  background: var(--aqua);
  border: 2px solid;
  border-color: #c4f8f2 #447a7a #447a7a #c4f8f2;
}
.list-pane {
  flex: 1;
  min-height: 0;
  display: flex;
  overflow: hidden;
  margin: 3px -2px 0 -2px;
  padding-right: 1px;
  background: linear-gradient(var(--teal-dark), var(--teal-dark)) top/100% 3px no-repeat;
  border-left: 4px solid #2f6c60;
  border-bottom: 2px solid #a8f0e0;
}
.layers {
  flex: 0 0 122px;
  height: 700px;
  margin-top: 5px;
  padding: 1px 1px 0;
  display: flex;
  flex-direction: column;
  gap: 4px;
  border: 1px solid #000;
}
.group { display: flex; flex-direction: column; gap: 2px; padding: 1px 2px 2px; background: #000; }
.layer { display: flex; gap: 2px; height: 14px; }
.layer input { appearance: none; flex: none; width: 14px; height: 14px; border: 2px solid #fff; background: linear-gradient(#fff, #fff) center/6px 6px no-repeat #000; }
.layer.current input { border-color: #000090; background-color: #000060; }
.swatch { flex: 0 0 14px; }
.swatch.green { background: #409400; }
.swatch.blue { background: #0020ff; }
.swatch.red { background: #f00; }
.name { flex: 1; display: flex; align-items: center; gap: 2px; padding: 0 2px 0 1px; line-height: 14px; background: var(--aqua); }
.name .hand { width: 8px; height: 8px; margin-left: auto; }
.name .win { width: 6px; height: 6px; }
.name.white { background: #fff; }
.name.jade { background: #00a57e; }
.name.amber { background: var(--amber); }
.name.slate { background: #9cb4bf; }
.name.pale { background: #dcdcd8; }
.rail { flex: 1; margin: 2px 4px 0 2px; background: linear-gradient(90deg, #90e0d0 0 2px, var(--teal) 2px 4px, #a8f0e0 4px 6px, var(--teal) 6px); }
.scrollbar {
  flex: 0 0 15px;
  display: flex;
  flex-direction: column;
  margin-top: 2px;
  padding: 0 1px;
  background: #44b098;
  border-left: 1px solid var(--teal-dark);
  border-right: 2px solid #a8f0e0;
}
.scrollbar svg { width: 11px; height: 13px; }
.thumb { flex: 0 0 88%; margin-bottom: auto; background: var(--teal); border: 1px solid; border-color: #a8f0e0 var(--teal-dark) var(--teal-dark) #a8f0e0; }
.selected { margin-top: 4px; padding: 0 2px; line-height: 17px; background: var(--amber); border: 1px solid #000; }

/* board canvas */
.canvas { flex: 1; position: relative; min-width: 0; overflow: hidden; background: #000; }
.board { width: 1122px; height: 720px; }
.silk { font: 8px "Liberation Sans", sans-serif; fill: #c09c10; }
.mark { font: 10px "DejaVu Sans Mono", monospace; }

/* popview window */
.popup {
  position: absolute;
  left: 587px;
  top: 163px;
  width: 325px;
  padding: 2px;
  background: #d4d0c8;
  border: 2px solid;
  border-color: #e8e8e4 #606060 #606060 #e8e8e4;
}
.popup-title {
  display: flex;
  align-items: center;
  gap: 3px;
  height: 18px;
  padding: 0 1px 0 2px;
  color: #fff;
  background: linear-gradient(90deg, #0a246a, #a6caf0);
}
.popup-title h2 { flex: 1; }
.popup-body { margin-top: 1px; background: #001410; }
.popup-main { display: flex; gap: 2px; }
.view { flex: 1; width: 280px; height: 247px; background: #000; border: 3px solid; border-color: var(--teal-dark) #b0ece0 #b0ece0 var(--teal-dark); }
.popup-tools { display: grid; gap: 2px; padding: 2px 1px 0 0; }
.popup-tools button {
  width: 33px;
  height: 33px;
  padding: 2px;
  background: var(--aqua);
  border: 2px solid #5cbca8;
  box-shadow: inset 2px 2px #c4f8ec, inset -2px -2px #3f8078;
}
.popup-tools svg { width: 21px; height: 21px; margin: auto; }
.popup-foot { padding: 2px; background: #5cbca8; border: 1px solid #000; }
.popup-foot button { width: 100%; height: 22px; font-size: 15px; background: var(--aqua); border: 2px solid; border-color: #c4f8ec #3f8078 #3f8078 #c4f8ec; }

/* tool panel */
.tools {
  flex: 0 0 163px;
  display: flex;
  flex-direction: column;
  background: #000;
  border-left: 2px solid var(--teal-dark);
  border-right: 2px solid #a8e8dc;
}
.tool-grid { display: grid; grid-template-columns: repeat(4, 38px); gap: 2px; padding: 1px 0 1px; border-top: 1px solid var(--teal-dark); border-bottom: 1px solid #a8e8dc; }
.tool-grid button {
  height: 38px;
  padding: 1px;
  background: var(--aqua);
  border: 3px solid;
  border-color: #c8f4f0 #5a9090 #5a9090 #c8f4f0;
}
.tool-grid svg { width: 30px; height: 30px; }
.tool-grid svg, .popup-tools svg, .mode svg { stroke: #000; fill: none; }
.tool-grid text { stroke: none; fill: #000; }
.f { fill: #000; stroke: none; }
.edit { padding-top: 3px; }
.edit button { background: #d0d0d0; border-color: #f0f0f0 #808080 #808080 #f0f0f0; }
.edit .bright { background: #fff; border-color: #fff #b0b0b0 #b0b0b0 #fff; }
.edit .pick { background: var(--amber); border-color: #ffe8b0 #a87c30 #a87c30 #ffe8b0; }
.tool-grid .alert { border-color: #d81818 #a81010 #a81010 #d81818; }
.tiny { font: 6px "DejaVu Sans", sans-serif; }
.ratio { font: bold 15px "Liberation Sans", sans-serif; text-anchor: middle; }
.query { font: bold 17px var(--mono); text-anchor: middle; }
.overview { flex: 1; width: 100%; min-height: 0; height: 264px; }
.coords {
  padding: 5px 2px 6px 1px;
  font-size: 15px;
  line-height: 15px;
  background: var(--teal);
  border-top: 2px solid #a8e8dc;
  box-shadow: inset 0 1px var(--teal-dark);
  margin-bottom: 2px;
  white-space: nowrap;
}

/* status line */
.status { display: flex; align-items: stretch; gap: 2px; height: 34px; padding: 1px 2px; background: #000; }
.mode { width: 30px; padding: 1px; background: var(--cream); border: 3px double #b8b490; }
.mode svg { width: 20px; height: 20px; margin: auto; }
.mode.framed { width: 29px; border: 3px solid #55b8a4; box-shadow: inset -2px -2px #b8b490, inset 1px 1px #fff; }
.mode.framed svg { width: 16px; height: 18px; }
.xy { width: 47px; padding-left: 1px; line-height: 31px; background: var(--cream); }
.entry { position: relative; width: 171px; padding: 2px; background: var(--cream); }
.entry input { width: 100%; height: 100%; padding: 0 4px; outline: none; border: 2px solid; border-color: #909074 #c8c8a0 #c8c8a0 #909074; background: var(--cream); }
.caret { position: absolute; left: 6px; top: 5px; height: 15px; border-left: 1px dotted #000; }
.prompt { flex: 1; padding-left: 2px; line-height: 31px; background: var(--cream); }
.units { width: 77px; padding: 2px 3px 3px 6px; background: var(--teal); }
.units select {
  appearance: none;
  width: 100%;
  height: 100%;
  padding-left: 4px;
  border: 2px solid;
  border-color: #a8f0e0 var(--teal-dark) var(--teal-dark) #a8f0e0;
  background: linear-gradient(#40a890, #40a890) right 7px center/8px 3px no-repeat, linear-gradient(#a8f0e0, #1f6b5c) right 5px center/12px 6px no-repeat;
}
.message { padding: 2px; background: var(--aqua-dark); border-bottom: 1px solid #e8fff8; }
.message div { height: 26px; background: #b4ffff; border: 1px solid #000; box-shadow: inset 2px 2px #d8ffff, inset -2px -2px #d8ffff, inset -4px -4px #5c9c9c; }
.footer { height: 15px; background: linear-gradient(var(--cream) 0 11px, #c8c8c0 11px 12px, #fff 12px 13px, #d4d0c8 13px); }
```
